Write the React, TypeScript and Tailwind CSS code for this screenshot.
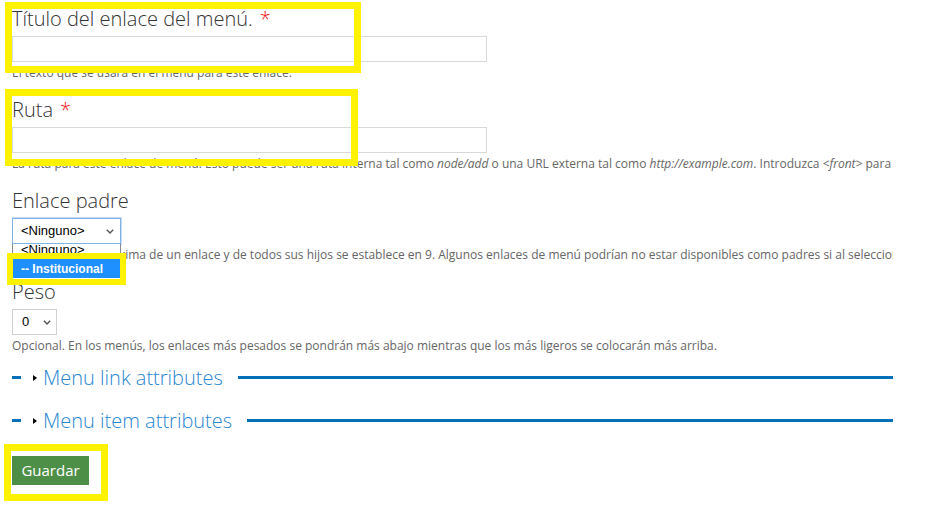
import React from "react";

function Chevron({ className }: { className?: string }) {
  return (
    <svg className={className} width="8" height="5" viewBox="0 0 8 5" fill="none">
      <path d="M0.8 0.8L4 4L7.2 0.8" stroke="#555" strokeWidth="1.4" />
    </svg>
  );
}

function Label({ text, required }: { text: string; required?: boolean }) {
  return (
    <div className="h-[28px] leading-[32px] text-[20px] font-light text-[#333] whitespace-nowrap">
      {text}
      {required && <span className="text-[#e11] ml-[7px]">*</span>}
    </div>
  );
}

function Desc({ children }: { children: React.ReactNode }) {
  return (
    <div className="mt-[2px] h-[18px] leading-[18px] text-[12px] text-[#666] whitespace-nowrap">
      {children}
    </div>
  );
}

function TextInput() {
  return <div className="w-[475px] h-[26px] border border-[#d9d9d9] bg-white" />;
}

function FieldsetRow({ title }: { title: string }) {
  return (
    <div className="flex items-center h-[28px]">
      <div className="w-[9px] h-[3px] bg-[#0071b8]" />
      <div className="ml-[12px] w-0 h-0 border-y-[3.5px] border-y-transparent border-l-[4px] border-l-black translate-y-[1px]" />
      <span className="ml-[6px] text-[20px] leading-[30px] h-[28px] font-light text-[#2a86cf] whitespace-nowrap">
        {title}
      </span>
      <div className="ml-[15px] flex-1 h-[3px] bg-[#0071b8]" />
    </div>
  );
}

export default function App() {
  return (
    <div className="relative w-[942px] h-[517px] bg-white overflow-hidden font-['Open_Sans',sans-serif]">
      <div className="w-[881px] ml-[12px] pt-[3px] overflow-hidden">
        {/* Item 1 */}
        <div className="mb-[12px]">
          <Label text="Título del enlace del menú." required />
          <div className="mt-[5px]">
            <TextInput />
          </div>
          <Desc>El texto que se usará en el menú para este enlace.</Desc>
        </div>
        {/* Item 2 */}
        <div className="mb-[12px]">
          <Label text="Ruta" required />
          <div className="mt-[5px]">
            <TextInput />
          </div>
          <Desc>
            La ruta para este enlace de menú. Esto puede ser una ruta interna tal como <em>node/add</em> o una URL
            externa tal como <em>http://example.com</em>. Introduzca <em>&lt;front&gt;</em> para enlazar a la página
            principal.
          </Desc>
        </div>
        {/* Item 3 */}
        <div className="mb-[12px]">
          <Label text="Enlace padre" />
          <div className="mt-[5px] h-[26px]">
            <div className="w-[109px] h-[26px] border border-[#7fb4e8] shadow-[0_0_0_1px_#c4dcf4] bg-white flex items-center justify-between pl-[8px] pr-[6px] font-['Liberation_Sans',Arial,sans-serif] text-[13px] text-black">
              <span>&lt;Ninguno&gt;</span>
              <Chevron />
            </div>
          </div>
          <Desc>
            La profundidad máxima de un enlace y de todos sus hijos se establece en 9. Algunos enlaces de menú podrían
            no estar disponibles como padres si al seleccionarlos se superara este límite.
          </Desc>
        </div>
        {/* Item 4 */}
        <div className="mb-[8px]">
          <Label text="Peso" />
          <div className="mt-[5px] h-[26px]">
            <div className="w-[45px] h-[26px] border border-[#d0d0d0] bg-white flex items-center justify-between pl-[9px] pr-[5px] font-['Liberation_Sans',Arial,sans-serif] text-[13px] text-black">
              <span>0</span>
              <Chevron />
            </div>
          </div>
          <Desc>
            Opcional. En los menús, los enlaces más pesados se pondrán más abajo mientras que los más ligeros se
            colocarán más arriba.
          </Desc>
        </div>
        <FieldsetRow title="Menu link attributes" />
        <div className="mt-[15px]">
          <FieldsetRow title="Menu item attributes" />
        </div>
        {/* Button */}
        <div className="mt-[22px]">
          <button className="w-[77px] h-[29px] bg-[#4e8f47] text-white text-[15px] leading-[29px] text-center">
            Guardar
          </button>
        </div>
      </div>

      {/* Open dropdown list (over content) */}
      <div className="absolute left-[12px] top-[244px] w-[109px] h-[36px] bg-white border-x border-b border-[#8a8a8a] overflow-hidden font-['Liberation_Sans',Arial,sans-serif] text-[13px]">
        <div className="-mt-[4px]">
          <div className="h-[19px] leading-[19px] pl-[8px] text-black">&lt;Ninguno&gt;</div>
          <div className="h-[19px] leading-[20px] pl-[8px] bg-[#1e90ff] text-white font-bold text-[12px]">
            -- Institucional
          </div>
        </div>
      </div>

      {/* Yellow highlight boxes */}
      <div className="absolute left-[5px] top-[2px] w-[356px] h-[71px] border-[7px] border-[#fff200]" />
      <div className="absolute left-[5px] top-[89px] w-[353px] h-[77px] border-[7px] border-[#fff200]" />
      <div className="absolute left-[7px] top-[253px] w-[119px] h-[32px] border-[6px] border-[#fff200]" />
      <div className="absolute left-[4px] top-[444px] w-[104px] h-[57px] border-[7px] border-[#fff200]" />
    </div>
  );
}
